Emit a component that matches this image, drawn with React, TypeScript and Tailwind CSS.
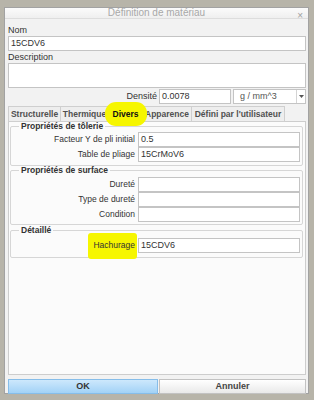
import React from 'react';

const font = { fontFamily: '"Liberation Sans", Arial, sans-serif' };

function Field({ value = '' }: { value?: string }) {
  return (
    <div className="h-[15px] bg-white border border-[#c4c4c4] px-[2px] flex items-center text-[9px] text-[#333] leading-none">
      {value}
    </div>
  );
}

function Row({ label, value, mark }: { label: string; value?: string; mark?: boolean }) {
  return (
    <div className="flex items-center h-[15px]">
      <div className="w-[125px] pr-[1px] text-right text-[8.5px] text-[#333] leading-none">
        {mark ? (
          <span className="relative inline-block">
            <span className="absolute -left-[5px] -right-[2px] -top-[8px] -bottom-[9px] bg-[#f6f600] rounded-[3px]" />
            <span className="relative">{label}</span>
          </span>
        ) : (
          label
        )}
      </div>
      <div className="ml-[2px] w-[162px]">
        <Field value={value} />
      </div>
    </div>
  );
}

function Group({ title, children, className }: { title: string; children: React.ReactNode; className?: string }) {
  return (
    <fieldset className={`ml-[1px] mr-[2px] border border-[#d6d6d6] rounded-[2px] pl-0 pr-[1px] ${className ?? ''}`}>
      <legend className="ml-[8px] px-[2px] text-[8.5px] font-bold text-[#333] leading-[9px]">{title}</legend>
      {children}
    </fieldset>
  );
}

const tabs = [
  { name: 'Structurelle', w: 'w-[53px]' },
  { name: 'Thermique', w: 'w-[49px]' },
  { name: 'Divers', w: 'w-[35px]', active: true },
  { name: 'Apparence', w: 'w-[50px]' },
  { name: "Défini par l'utilisateur", w: 'w-[94px]' },
];

export default function App() {
  return (
    <div className="w-[314px] h-[400px] bg-[#b7b4a9] overflow-hidden pt-[7px] pl-[4px]" style={font}>
      <div className="w-[305px] h-[387px] border border-[#a2a2a2] bg-[#f2f2f2] flex flex-col">
        {/* title bar */}
        <div className="h-[17px] relative flex items-center justify-center bg-gradient-to-b from-[#fbfbfb] to-[#efefef] border-b border-[#dddddd]">
          <span className="text-[10px] text-[#a8a8a8] leading-none">Définition de matériau</span>
          <span className="absolute right-[5px] top-[3px] text-[10px] text-[#a0a0a0] leading-none">×</span>
        </div>

        <div className="pl-[3px] pr-[2px] flex flex-col flex-1">
          <div className="h-[9px] mt-[7px] text-[9px] text-[#333] leading-[9px]">Nom</div>
          <div className="mt-[1px]">
            <Field value="15CDV6" />
          </div>
          <div className="h-[9px] mt-[2px] text-[9px] text-[#333] leading-[9px]">Description</div>
          <div className="mt-[1px] h-[25px] bg-white border border-[#c4c4c4]" />

          {/* density */}
          <div className="mt-[1px] h-[15px] flex items-center">
            <div className="w-[149px] text-right text-[9px] text-[#333] leading-none">Densité</div>
            <div className="ml-[2px] w-[72px]">
              <Field value="0.0078" />
            </div>
            <div className="ml-[2px] flex-1 h-[15px] flex bg-white border border-[#c4c4c4]">
              <div className="flex-1 flex items-center pl-[6px] text-[9px] text-[#555] leading-none">g / mm^3</div>
              <div className="w-[9px] border-l border-[#d4d4d4] flex items-center justify-center">
                <svg width="5" height="3" viewBox="0 0 5 3">
                  <path d="M0 0h5L2.5 3z" fill="#555" />
                </svg>
              </div>
            </div>
          </div>

          {/* tabs */}
          <div className="mt-[2px] h-[16px] flex">
            {tabs.map((t) => (
              <div
                key={t.name}
                className={`${t.w} h-[16px] relative flex items-center justify-center border border-[#cfcfcf] -ml-px first:ml-0 ${
                  t.active ? 'bg-[#fbfbfb] border-b-0 z-10' : 'bg-[#eeeeee]'
                }`}
              >
                {t.active && (
                  <span className="absolute -left-[4px] -right-[5px] -top-[5px] -bottom-[4px] bg-[#f6f600] rounded-[11px]" />
                )}
                <span
                  className={`relative text-[8.5px] font-bold leading-none ${t.active ? 'text-[#111]' : 'text-[#505050]'}`}
                >
                  {t.name}
                </span>
              </div>
            ))}
          </div>

          {/* panel */}
          <div className="h-[254px] -mt-px border border-[#cdcdcd] bg-[#fbfbfb] flex flex-col">
            <Group title="Propriétés de tôlerie" className="pt-[1px] pb-[3px]">
              <Row label="Facteur Y de pli initial" value="0.5" />
              <Row label="Table de pliage" value="15CrMoV6" />
            </Group>
            <Group title="Propriétés de surface" className="pt-[2px] pb-[2px]">
              <Row label="Dureté" />
              <Row label="Type de dureté" />
              <Row label="Condition" />
            </Group>
            <Group title="Détaillé" className="mt-[1px] pt-[3px] pb-[4px]">
              <Row label="Hachurage" value="15CDV6" mark />
            </Group>
          </div>

          {/* buttons */}
          <div className="mt-[4px] h-[15px] flex">
            <button className="w-[150px] h-[15px] border border-[#86bde9] bg-gradient-to-b from-[#cde8fc] to-[#a2d2f6] text-[9px] font-bold text-[#333] leading-none">
              OK
            </button>
            <button className="flex-1 ml-px h-[15px] border border-[#c2c2c2] bg-gradient-to-b from-[#ffffff] to-[#e9e9e9] text-[9px] font-bold text-[#444] leading-none">
              Annuler
            </button>
          </div>
        </div>
      </div>
    </div>
  );
}
